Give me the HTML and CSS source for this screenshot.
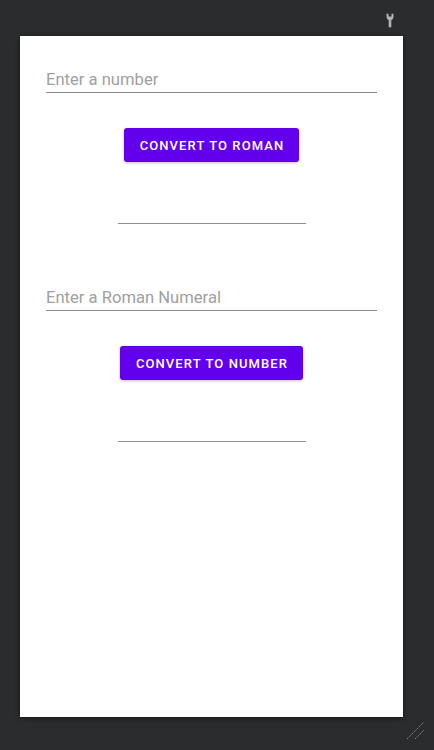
FILE: index.html
```html
<!DOCTYPE html>
<html>
<head>
<meta charset="utf-8">
<link rel="stylesheet" href="styles.css">
</head>
<body>
<div class="frame">
  <div class="topbar">
    <svg class="wrench" width="8" height="15" viewBox="0 0 8 15">
      <path d="M0.5 0.8 L0.5 3.8 Q0.5 6.4 2.7 7 L2.7 13.6 Q2.7 14.5 4 14.5 Q5.3 14.5 5.3 13.6 L5.3 7 Q7.5 6.4 7.5 3.8 L7.5 0.8 L5.5 0.8 L5.5 3.4 L2.5 3.4 L2.5 0.8 Z" fill="#b4b4b4"/>
    </svg>
  </div>
  <main class="screen">
    <section class="block">
      <input class="field" type="text" placeholder="Enter a number">
      <button class="btn">CONVERT TO ROMAN</button>
      <div class="result"></div>
    </section>
    <section class="block">
      <input class="field" type="text" placeholder="Enter a Roman Numeral">
      <button class="btn">CONVERT TO NUMBER</button>
      <div class="result"></div>
    </section>
  </main>
  <svg class="resize" width="22" height="22" viewBox="0 0 22 22">
    <line x1="1" y1="21" x2="18" y2="4" stroke="#8a8a8a" stroke-width="1" stroke-dasharray="1.4 1"/>
    <line x1="9" y1="21" x2="18" y2="12" stroke="#8a8a8a" stroke-width="1" stroke-dasharray="1.4 1"/>
  </svg>
</div>
</body>
</html>
```
FILE: styles.css
```css
html, body {
  margin: 0;
  padding: 0;
  background: #2b2c2e;
  height: 750px;
  overflow: hidden;
}
.frame {
  position: relative;
  width: 434px;
  height: 750px;
}
.topbar {
  height: 36px;
  display: flex;
  justify-content: flex-end;
  align-items: flex-start;
  padding-right: 40px;
  box-sizing: border-box;
}
.wrench {
  margin-top: 13px;
}
.screen {
  margin-left: 20px;
  width: 383px;
  height: 681px;
  background: #ffffff;
  box-shadow: 0 1px 5px rgba(0,0,0,0.55);
  box-sizing: border-box;
  padding: 33px 26px 0 26px;
  display: flex;
  flex-direction: column;
  gap: 63px;
}
.block {
  display: flex;
  flex-direction: column;
  align-items: center;
}
.field {
  width: 100%;
  box-sizing: border-box;
  border: none;
  border-bottom: 1px solid #8a8a8a;
  outline: none;
  padding: 0 0 3px 0;
  margin: 0;
  height: 24px;
  font-family: Roboto, "Liberation Sans", sans-serif;
  font-size: 16.6px;
  line-height: 20px;
  color: #222;
  background: transparent;
}
.field::placeholder {
  color: #a0a0a0;
}
.btn {
  margin-top: 35px;
  height: 34px;
  padding: 0 15px 0 16px;
  border: none;
  border-radius: 3px;
  background: #6200ee;
  color: #ffffff;
  font-family: Roboto, "Liberation Sans", sans-serif;
  font-weight: 500;
  font-size: 13px;
  letter-spacing: 1.1px;
  box-shadow: 0 1px 3px rgba(0,0,0,0.25);
}
.result {
  margin-top: 61px;
  width: 188px;
  height: 0;
  border-top: 1px solid #8e8e8e;
}
.resize {
  position: absolute;
  left: 406px;
  top: 718px;
}
```
